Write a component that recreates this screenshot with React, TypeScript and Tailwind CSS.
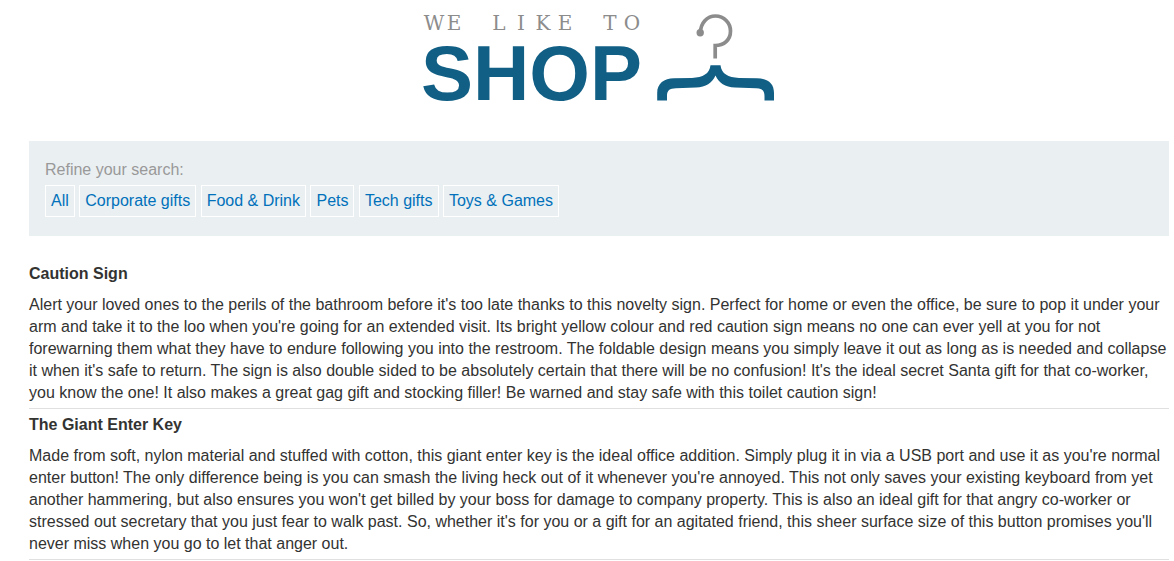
const categories = ['All', 'Corporate gifts', 'Food & Drink', 'Pets', 'Tech gifts', 'Toys & Games'];

const products = [
  {
    name: 'Caution Sign',
    description:
      "Alert your loved ones to the perils of the bathroom before it's too late thanks to this novelty sign. Perfect for home or even the office, be sure to pop it under your arm and take it to the loo when you're going for an extended visit. Its bright yellow colour and red caution sign means no one can ever yell at you for not forewarning them what they have to endure following you into the restroom. The foldable design means you simply leave it out as long as is needed and collapse it when it's safe to return. The sign is also double sided to be absolutely certain that there will be no confusion! It's the ideal secret Santa gift for that co-worker, you know the one! It also makes a great gag gift and stocking filler! Be warned and stay safe with this toilet caution sign!",
  },
  {
    name: 'The Giant Enter Key',
    description:
      "Made from soft, nylon material and stuffed with cotton, this giant enter key is the ideal office addition. Simply plug it in via a USB port and use it as you're normal enter button! The only difference being is you can smash the living heck out of it whenever you're annoyed. This not only saves your existing keyboard from yet another hammering, but also ensures you won't get billed by your boss for damage to company property. This is also an ideal gift for that angry co-worker or stressed out secretary that you just fear to walk past. So, whether it's for you or a gift for an agitated friend, this sheer surface size of this button promises you'll never miss when you go to let that anger out.",
  },
];

function Logo() {
  return (
    <svg width="358" height="118" viewBox="-4 -12 358 118" role="img" aria-label="We like to shop">
      <text
        y="16"
        x="10 30 52 75 97 119 141 163 186 208"
        textAnchor="middle"
        fill="#8c8c8c"
        className="font-['DejaVu_Serif',serif] text-[20px]"
      >
        WE LIKE TO
      </text>
      <text
        x="-3"
        y="86"
        fill="#115f85"
        className="font-['Liberation_Sans',Arial,sans-serif] text-[78px] font-bold"
      >
        SHOP
      </text>
      <path
        d="M276.5 18.5 C276.5 9 283 2 291.5 2 C300 2 306.500 9 306.500 17 C306.500 26 300 31.500 291.200 31.500 V44.500"
        fill="none"
        stroke="#8c8c8c"
        strokeWidth="3.700"
      />
      <circle cx="276.200" cy="18.800" r="3.700" fill="#8c8c8c" />
      <path
        d="M286.500 51.300 H296.500 C297.500 60 304 63.300 315 64 L333 64.300 C344 64.500 350 69.500 350 79 V86.500 H340.500 V82 C340.500 76.500 338 74.500 332 74.300 L311 73.600 C301 73 295 69 291.500 61.500 C288 69 282 73 272 73.600 L252 74.300 C245.500 74.500 243 76.500 243 82 V86.500 H233.200 V79 C233.200 69.500 240 64.500 250 64.300 L268 64 C279 63.300 285.500 60 286.500 51.300 Z"
        fill="#115f85"
      />
    </svg>
  );
}

export default function App() {
  return (
    <div className="bg-white pl-[29px] pr-[5px] font-['Liberation_Sans',Arial,sans-serif] text-base leading-[22px] text-[#333332]">
      <header className="flex justify-center pt-[2px] pb-[21px]">
        <Logo />
      </header>

      <main>
        <nav aria-labelledby="refine" className="bg-[#eaeff2] px-4 pt-[17px] pb-[19px]">
          <h2 id="refine" className="mb-[3px] leading-6 text-[#999999]">
            Refine your search:
          </h2>
          <div className="leading-[30px]">
            {categories.map((category) => (
              <span key={category}>
                <a
                  href="#"
                  className="inline-block border border-white px-[5px] align-top text-[#0071ba] hover:underline"
                >
                  {category}
                </a>{' '}
              </span>
            ))}
          </div>
        </nav>

        <section className="pt-[22px]" aria-label="Products">
          {products.map((product) => (
            <article key={product.name} className="border-b border-[#e0e0e0] pt-[5px] pb-1">
              <h3 className="mb-[9px] font-bold">{product.name}</h3>
              <p>{product.description}</p>
            </article>
          ))}
        </section>
      </main>
    </div>
  );
}
